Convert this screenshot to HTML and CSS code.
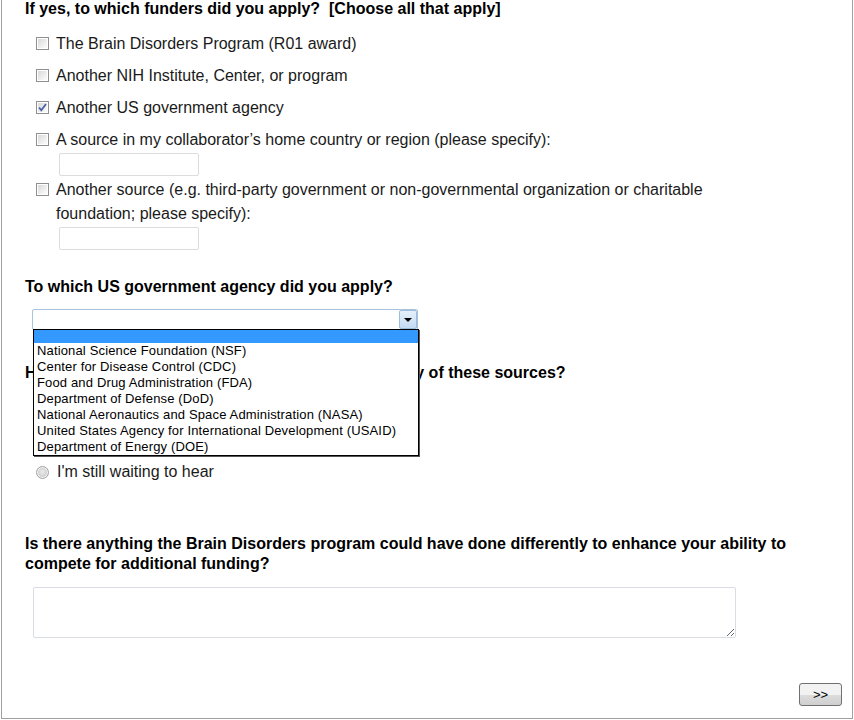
FILE: index.html
```html
<!DOCTYPE html>
<html lang="en">
<head>
    <meta charset="UTF-8">
    <title>Funding Survey</title>
    <link rel="stylesheet" href="styles.css">
</head>
<body>
    <div class="page">
        <h2 class="question first">If yes, to which funders did you apply?&nbsp; [Choose all that apply]</h2>
        <div class="choices">
            <label class="opt">
                <span class="box"></span>
                <span class="opt-body">The Brain Disorders Program (R01 award)</span>
            </label>
            <label class="opt">
                <span class="box"></span>
                <span class="opt-body">Another NIH Institute, Center, or program</span>
            </label>
            <label class="opt">
                <span class="box checked">
                    <svg width="11" height="11" viewBox="0 0 11 11"><path d="M2 5.5 L4.3 8.2 L9 2" fill="none" stroke="#4b63a4" stroke-width="1.8"/></svg>
                </span>
                <span class="opt-body">Another US government agency</span>
            </label>
            <label class="opt has-input">
                <span class="box"></span>
                <span class="opt-body">A source in my collaborator’s home country or region (please specify):
                    <input type="text" class="specify">
                </span>
            </label>
            <label class="opt has-input">
                <span class="box"></span>
                <span class="opt-body">Another source (e.g. third-party government or non-governmental organization or charitable foundation; please specify):
                    <input type="text" class="specify">
                </span>
            </label>
        </div>

        <h2 class="question agency">To which US government agency did you apply?</h2>
        <div class="select-wrap">
            <div class="select">
                <span class="select-arrow"><i></i></span>
            </div>
            <ul class="dropdown">
                <li class="active"></li>
                <li>National Science Foundation (NSF)</li>
                <li>Center for Disease Control (CDC)</li>
                <li>Food and Drug Administration (FDA)</li>
                <li>Department of Defense (DoD)</li>
                <li>National Aeronautics and Space Administration (NASA)</li>
                <li>United States Agency for International Development (USAID)</li>
                <li>Department of Energy (DOE)</li>
            </ul>
        </div>

        <h2 class="question received">Have you received a notification of funding from any of these sources?</h2>
        <div class="choices radios">
            <label class="opt"><span class="radio"></span><span class="opt-body">Yes</span></label>
            <label class="opt"><span class="radio"></span><span class="opt-body">No</span></label>
            <label class="opt"><span class="radio"></span><span class="opt-body">I'm still waiting to hear</span></label>
        </div>

        <h2 class="question feedback">Is there anything the Brain Disorders program could have done differently to enhance your ability to compete for additional funding?</h2>
        <textarea class="comments"></textarea>

        <div class="nav">
            <button class="next">&gt;&gt;</button>
        </div>
    </div>
</body>
</html>
```

FILE: styles.css
```css
body {
    margin: 0;
    font-family: "Liberation Sans", Arial, sans-serif;
    color: #1a1a1a;
    background: #fff;
}

.page {
    margin: 0 1px 1px 1px;
    padding: 0 10px 12px 23px;
    border: 1px solid #a0a0a0;
    border-top: none;
}

/* Questions */
.question {
    margin: 0;
    font-size: 16px;
    line-height: 20px;
    font-weight: bold;
    color: #000;
}

.question.first {
    margin-top: -1px;
}

.question.agency {
    margin-top: 27px;
}

.question.received {
    margin-top: 33px;
}

.question.feedback {
    margin-top: 50px;
    max-width: 800px;
}

/* Checkbox / radio lists */
.choices {
    display: flex;
    flex-direction: column;
    margin-top: 13px;
}

.choices.radios {
    margin-top: 13px;
}

.opt {
    display: flex;
    align-items: flex-start;
    font-size: 16px;
    line-height: 24px;
    padding-bottom: 8px;
}

.opt.has-input {
    padding-bottom: 2px;
}

.opt:last-child {
    padding-bottom: 0;
}

.opt-body {
    max-width: 680px;
}

.box {
    flex: none;
    width: 11px;
    height: 11px;
    margin: 5px 7px 0 11px;
    border: 1px solid #8f8f8f;
    background: linear-gradient(135deg, #d4d4d4, #f4f4f4 70%, #fff);
    box-shadow: inset 0 0 0 1px #fff;
    display: flex;
    align-items: center;
    justify-content: center;
}

.box svg {
    display: block;
}

.radio {
    flex: none;
    width: 11px;
    height: 11px;
    margin: 6px 8px 0 11px;
    border: 1px solid #a4a4a4;
    border-radius: 50%;
    background: radial-gradient(circle at 50% 45%, #ececec, #c9c9c9 70%);
    box-shadow: inset 0 0 0 1px #f4f4f4;
}

.specify {
    display: block;
    box-sizing: border-box;
    width: 140px;
    height: 23px;
    margin: 1px 0 0 3px;
    border: 1px solid #dcdcdc;
    border-radius: 2px;
    background: #fff;
}

/* Agency select, open */
.select-wrap {
    position: relative;
    width: 386px;
    margin: 12px 0 0 7px;
}

.select {
    box-sizing: border-box;
    height: 21px;
    border: 1px solid #a9c3dc;
    border-radius: 2px;
    background: #fff;
    display: flex;
    justify-content: flex-end;
}

.select-arrow {
    box-sizing: border-box;
    width: 18px;
    height: 19px;
    border: 1px solid #9dbbdd;
    border-radius: 2px;
    background: linear-gradient(#e6f0fb, #c3dbf4);
    display: flex;
    align-items: center;
    justify-content: center;
}

.select-arrow i {
    width: 0;
    height: 0;
    border-left: 4px solid transparent;
    border-right: 4px solid transparent;
    border-top: 4px solid #000;
    margin-top: 1px;
}

.dropdown {
    position: absolute;
    top: 20px;
    left: 1px;
    box-sizing: border-box;
    width: 386px;
    margin: 0;
    padding: 0;
    list-style: none;
    background: #fff;
    border: 1px solid #000;
    box-shadow: 1px 1px 0 #555;
    font-size: 13px;
    letter-spacing: 0.15px;
    color: #000;
}

.dropdown li {
    height: 16px;
    line-height: 16px;
    padding-left: 3px;
    white-space: nowrap;
}

.dropdown li.active {
    height: 13px;
    background: #3399ff;
}

/* Free text */
.comments {
    display: block;
    box-sizing: border-box;
    width: 703px;
    height: 51px;
    margin: 13px 0 0 8px;
    border: 1px solid #d9dde3;
    border-radius: 2px;
    resize: both;
}

.nav {
    display: flex;
    justify-content: flex-end;
    margin-top: 45px;
}

.next {
    width: 43px;
    height: 23px;
    padding: 0;
    border: 1px solid #707070;
    border-radius: 3px;
    background: linear-gradient(#f2f2f2 50%, #dddddd 50%, #cfcfcf);
    font-family: "Liberation Sans", Arial, sans-serif;
    font-size: 13px;
    color: #000;
}
```
